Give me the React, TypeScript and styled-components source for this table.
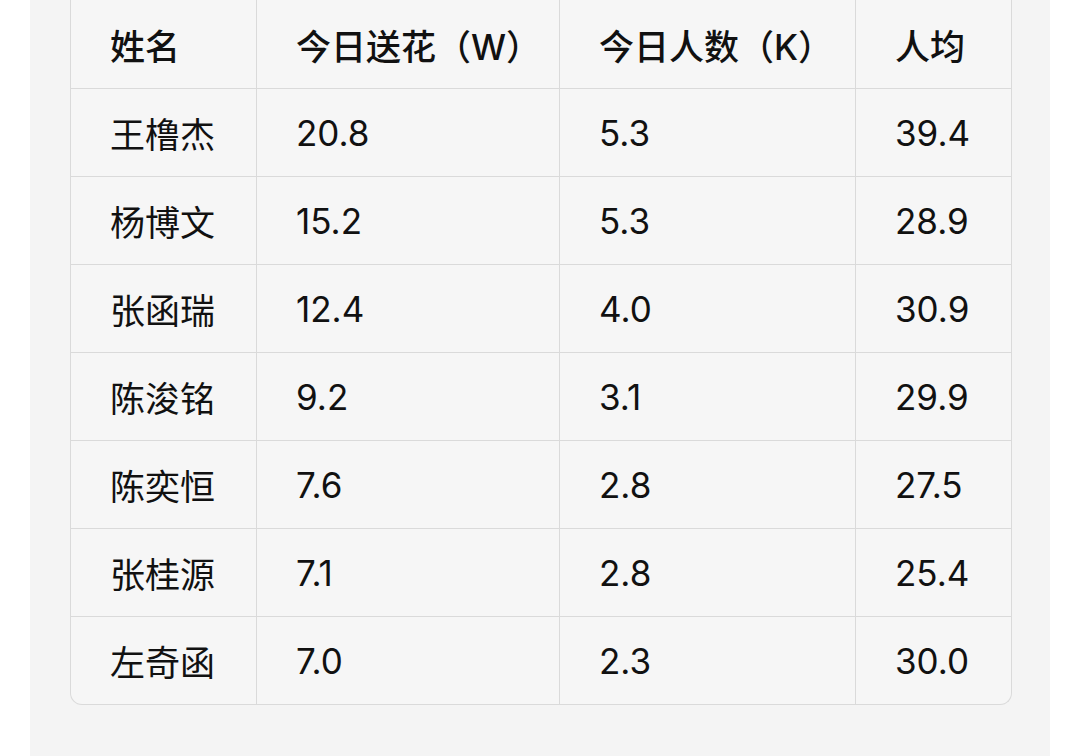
import styled, { createGlobalStyle } from "styled-components";

const GlobalStyle = createGlobalStyle`
  html, body {
    margin: 0;
    padding: 0;
    background: #ffffff;
    overflow: hidden;
  }
  body {
    font-family: Inter, "Noto Sans CJK SC", sans-serif;
    color: #111111;
  }
`;

const Page = styled.div`
  height: 756px;
  padding: 0 30px;
  box-sizing: border-box;
`;

const Panel = styled.div`
  height: 100%;
  background: #f4f4f4;
  padding: 0 40px;
  box-sizing: border-box;
`;

const Table = styled.table`
  width: 940px;
  border-collapse: separate;
  border-spacing: 0;
  table-layout: fixed;
  background: #f6f6f6;
  border: 1px solid #dadada;
  border-top: none;
  border-radius: 0 0 12px 12px;
  overflow: hidden;
`;

const HeadCell = styled.th<{ $w: number }>`
  width: ${(p) => p.$w}px;
  height: 88px;
  padding: 0 0 0 39px;
  text-align: left;
  font-size: 35px;
  font-weight: 500;
  box-sizing: border-box;
  border-left: 1px solid #dadada;
  &:first-child {
    border-left: none;
  }
`;

const Cell = styled.td`
  height: 88px;
  padding: 0 0 0 39px;
  font-size: 35px;
  font-weight: 400;
  box-sizing: border-box;
  border-top: 1px solid #dadada;
  border-left: 1px solid #dadada;
  &:first-child {
    border-left: none;
  }
`;

const columns = [
  { label: "姓名", width: 185 },
  { label: "今日送花（W）", width: 303 },
  { label: "今日人数（K）", width: 296 },
  { label: "人均", width: 156 },
];

const rows = [
  ["王橹杰", "20.8", "5.3", "39.4"],
  ["杨博文", "15.2", "5.3", "28.9"],
  ["张函瑞", "12.4", "4.0", "30.9"],
  ["陈浚铭", "9.2", "3.1", "29.9"],
  ["陈奕恒", "7.6", "2.8", "27.5"],
  ["张桂源", "7.1", "2.8", "25.4"],
  ["左奇函", "7.0", "2.3", "30.0"],
];

export default function App() {
  return (
    <>
      <GlobalStyle />
      <Page>
        <Panel>
          <Table>
            <thead>
              <tr>
                {columns.map((c) => (
                  <HeadCell key={c.label} $w={c.width}>
                    {c.label}
                  </HeadCell>
                ))}
              </tr>
            </thead>
            <tbody>
              {rows.map((r) => (
                <tr key={r[0]}>
                  {r.map((v, i) => (
                    <Cell key={i}>{v}</Cell>
                  ))}
                </tr>
              ))}
            </tbody>
          </Table>
        </Panel>
      </Page>
    </>
  );
}
